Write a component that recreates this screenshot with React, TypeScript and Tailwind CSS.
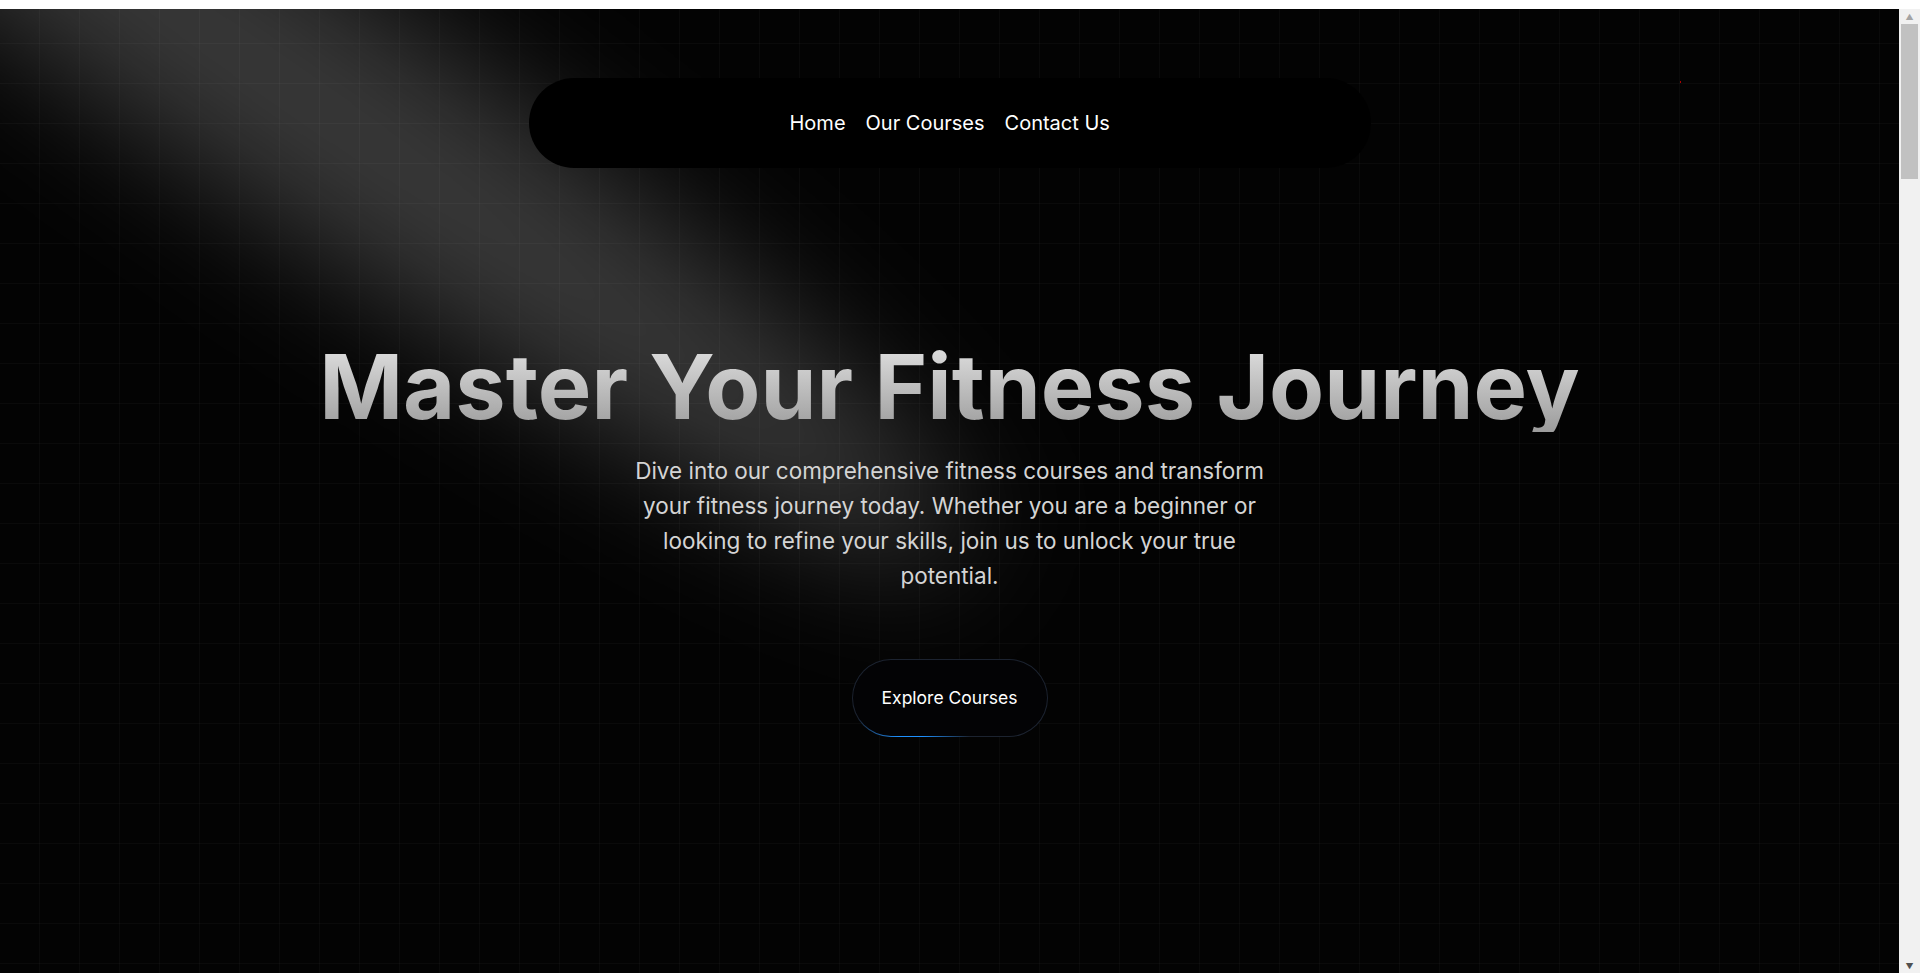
import React from "react";

const links = ["Home", "Our Courses", "Contact Us"];

function Spotlight() {
  return (
    <svg
      className="pointer-events-none absolute inset-0 z-[1] h-full w-full overflow-visible"
      fill="none"
    >
      <defs>
        <filter id="spot-blur" x="-100%" y="-100%" width="300%" height="300%" filterUnits="objectBoundingBox">
          <feGaussianBlur stdDeviation="64" />
        </filter>
      </defs>
      <ellipse
        cx="295"
        cy="82"
        rx="811"
        ry="118"
        transform="rotate(34.69 295 82)"
        fill="white"
        fillOpacity="0.21"
        filter="url(#spot-blur)"
      />
    </svg>
  );
}

function FakeScrollbar() {
  return (
    <div className="flex w-[21px] flex-col bg-[#f1f1f1]">
      <div className="flex h-[15px] items-center justify-center text-[8px] leading-none text-[#a3a3a3]">▲</div>
      <div className="mx-auto h-[155px] w-[17px] bg-[#c1c1c1]" />
      <div className="flex-1" />
      <div className="flex h-[15px] items-center justify-center text-[8px] leading-none text-[#505050]">▼</div>
    </div>
  );
}

export default function App() {
  return (
    <div className="flex h-screen w-full flex-col overflow-hidden bg-white font-['Inter',sans-serif]">
      <div className="h-[9px] shrink-0 bg-white" />

      <div className="flex min-h-0 flex-1">
        <section className="relative flex flex-1 flex-col items-center overflow-hidden bg-[#030303] bg-[linear-gradient(to_right,rgba(255,255,255,0.028)_1px,transparent_1px),linear-gradient(to_bottom,rgba(255,255,255,0.028)_1px,transparent_1px)] bg-[size:40px_40px] bg-[position:39px_34px] antialiased">
          <Spotlight />

          <div className="absolute left-[1680px] top-[72px] h-[2px] w-px bg-[#b00000]" />

          <nav className="relative z-10 mt-[69px] flex h-[90px] w-[842px] items-center rounded-full bg-black pl-[261px]">
            <ul className="flex items-center gap-5 text-xl text-white">
              {links.map((l) => (
                <li key={l}>
                  <a href="#">{l}</a>
                </li>
              ))}
            </ul>
          </nav>

          <h1 className="relative z-10 mt-[174px] bg-gradient-to-b from-[#e2e2e2] to-[#9c9c9c] bg-clip-text text-center text-[90px] font-bold leading-none text-transparent">
            Master Your Fitness Journey
          </h1>

          <p className="relative z-10 mt-[21px] max-w-[646px] text-center text-[22.5px] leading-[35px] text-neutral-300">
            Dive into our comprehensive fitness courses and transform your fitness journey today. Whether you are a
            beginner or looking to refine your skills, join us to unlock your true potential.
          </p>

          <a
            href="#"
            className="relative z-10 mt-[66px] block h-[78px] w-[196px] overflow-hidden rounded-full bg-[#1c2330] p-px"
          >
            <div className="absolute inset-0 bg-[radial-gradient(30%_55%_at_30%_100%,#1e90ff_0%,#1e90ff_20%,transparent_100%)]" />
            <div className="relative flex h-full w-full items-center justify-center rounded-full bg-[#030305] text-[17.5px] text-white">
              Explore Courses
            </div>
          </a>
        </section>

        <FakeScrollbar />
      </div>
    </div>
  );
}
